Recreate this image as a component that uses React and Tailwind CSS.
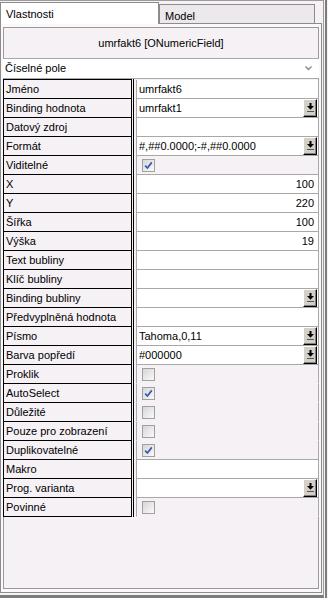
import React from 'react';

const rows = [
    { label: 'Jméno', kind: 'text', value: 'umrfakt6' },
    { label: 'Binding hodnota', kind: 'text', value: 'umrfakt1', button: true },
    { label: 'Datový zdroj', kind: 'text', value: '' },
    { label: 'Formát', kind: 'text', value: '#,##0.0000;-#,##0.0000', button: true },
    { label: 'Viditelné', kind: 'check', value: true },
    { label: 'X', kind: 'num', value: '100' },
    { label: 'Y', kind: 'num', value: '220' },
    { label: 'Šířka', kind: 'num', value: '100' },
    { label: 'Výška', kind: 'num', value: '19' },
    { label: 'Text bubliny', kind: 'text', value: '' },
    { label: 'Klíč bubliny', kind: 'text', value: '' },
    { label: 'Binding bubliny', kind: 'text', value: '', button: true },
    { label: 'Předvyplněná hodnota', kind: 'text', value: '' },
    { label: 'Písmo', kind: 'text', value: 'Tahoma,0,11', button: true },
    { label: 'Barva popředí', kind: 'text', value: '#000000', button: true },
    { label: 'Proklik', kind: 'check', value: false },
    { label: 'AutoSelect', kind: 'check', value: true },
    { label: 'Důležité', kind: 'check', value: false },
    { label: 'Pouze pro zobrazení', kind: 'check', value: false },
    { label: 'Duplikovatelné', kind: 'check', value: true },
    { label: 'Makro', kind: 'text', value: '' },
    { label: 'Prog. varianta', kind: 'text', value: '', button: true },
    { label: 'Povinné', kind: 'check', value: false },
];

const CheckBox = ({ on }) => (
    <span className="w-[13px] h-[13px] border border-[#A0A0A0] bg-linear-to-br from-[#D6D6D6] to-[#FAFAFA] flex items-center justify-center">
        {on && (
            <svg width="9" height="9" viewBox="0 0 9 9">
                <path d="M1.2 4.6 L3.4 7 L7.8 1.4" stroke="#3658B0" strokeWidth="1.7" fill="none" />
            </svg>
        )}
    </span>
);

const DropButton = () => (
    <span className="w-[14px] h-[18px] mr-px bg-[#D4D0C8] border-t border-l border-t-white border-l-white border-r border-b border-r-black border-b-black shadow-[inset_-1px_-1px_0_#808080] flex items-center justify-center">
        <svg width="7" height="10" viewBox="0 0 7 10">
            <rect x="2.5" y="0" width="2" height="3" fill="#000" />
            <path d="M0 3 H7 L3.5 6.8 Z" fill="#000" />
            <rect x="0" y="8" width="7" height="1" fill="#555" />
        </svg>
    </span>
);

const App = () => {
    return (
        <div className="w-[328px] h-[598px] flex bg-[#F5F1F5] text-[11px] text-black font-['Liberation_Sans',Arial,sans-serif] leading-none overflow-hidden">
            <div className="w-[324px] h-full flex flex-col border-t border-r border-[#9C9C9C] border-b-[3px] border-b-[#7C7C7C]">
                {/* tabs */}
                <div className="h-[22px] flex items-end">
                    <div className="relative z-10 -mb-px w-[159px] h-[22px] bg-white border border-b-0 border-[#8C8C8C] pl-[5px] pt-[6px]">
                        Vlastnosti
                    </div>
                    <div className="w-[156px] h-[19px] bg-[#ECE8EC] border border-b-0 border-[#8C8C8C] pl-[5px] pt-[6px]">
                        Model
                    </div>
                </div>

                {/* panel */}
                <div className="w-[322px] h-[570px] border border-[#8C8C8C] bg-[#FAF8FA] px-[2px] pt-[3px] pb-[3px]">
                    <div className="h-full border border-[#9A9A9A] bg-[#F5F1F5] flex flex-col">
                        <div className="h-[30px] flex items-center justify-center">
                            umrfakt6 [ONumericField]
                        </div>
                        <div className="-mx-px h-[21px] bg-white border-y border-[#A8A8A8] flex items-center justify-between pl-[2px] pr-[7px]">
                            <span>Číselné pole</span>
                            <svg width="7" height="5" viewBox="0 0 7 5">
                                <path d="M0.5 0.5 L3.5 3.5 L6.5 0.5" stroke="#888" strokeWidth="1.4" fill="none" />
                            </svg>
                        </div>

                        {/* property grid */}
                        <div className="-mx-px flex">
                            <div className="w-[129px] border-t border-black">
                                {rows.map((r) => (
                                    <div key={r.label} className="h-[19px] border-x border-b border-black bg-[#F5F1F5] flex items-center pl-[2px] whitespace-nowrap">
                                        {r.label}
                                    </div>
                                ))}
                            </div>
                            <div className="w-px ml-px bg-black" />
                            <div className="flex-1 ml-[2px] pt-px">
                                {rows.map((r, i) => {
                                    const next = rows[i + 1];
                                    const white = r.kind !== 'check';
                                    const line = white || (next && next.kind !== 'check');
                                    return (
                                        <div
                                            key={r.label}
                                            className={`h-[19px] border-x border-[#A8A8A8] flex items-center ${line ? 'border-b border-b-[#A8A8A8]' : 'border-b border-b-transparent'} ${white ? 'bg-white' : 'bg-[#F5F1F5]'} ${r.kind === 'num' ? 'pr-[4px]' : 'pl-[2px]'}`}
                                        >
                                            {r.kind === 'check' ? (
                                                <span className="ml-[3px]"><CheckBox on={r.value} /></span>
                                            ) : (
                                                <>
                                                    <span className={`flex-1 whitespace-nowrap ${r.kind === 'num' ? 'text-right' : ''}`}>{r.value}</span>
                                                    {r.button && <DropButton />}
                                                </>
                                            )}
                                        </div>
                                    );
                                })}
                            </div>
                        </div>
                    </div>
                </div>
            </div>
            <div className="w-[4px] h-full flex">
                <div className="ml-px w-[2px] h-full bg-[#7C7C7C]" />
            </div>
        </div>
    );
};

export default App;
